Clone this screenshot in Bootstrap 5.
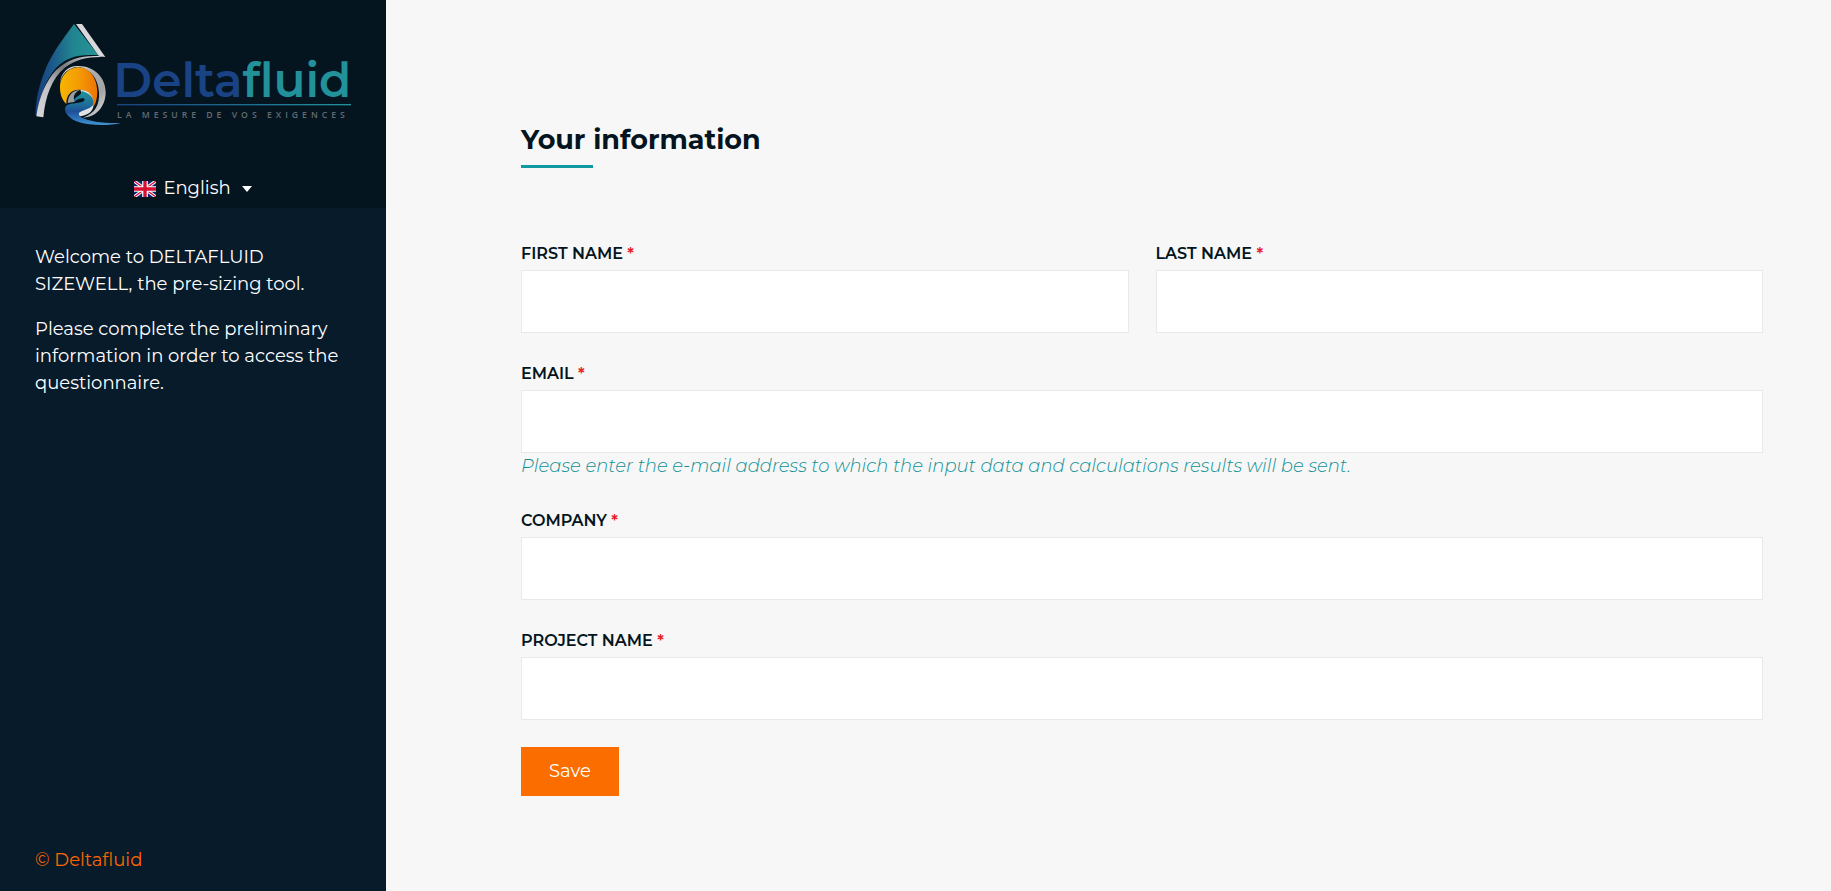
<!DOCTYPE html>
<html lang="en">
<head>
<meta charset="utf-8">
<meta name="viewport" content="width=device-width, initial-scale=1">
<title>Deltafluid Sizewell</title>
<link href="https://cdn.jsdelivr.net/npm/bootstrap@5.3.0/dist/css/bootstrap.min.css" rel="stylesheet">
<style>
  body { font-family: Montserrat, Inter, sans-serif; font-size: 18px; line-height: 27px; color: #041520; background: #f7f7f7; }
  .side-panel { background: #071b2b; color: #fff; }
  .side-top { background: #041520; padding: 22px 35px 6px; }
  .side-text { padding: 36px 35px 0; }
  .side-text p { margin-bottom: 18px; }
  .side-foot { padding: 17px 35px; }
  .side-foot a { color: #ff6600; text-decoration: none; }
  .lang-btn { color: #fff; font-size: 18px; line-height: 27px; padding: 0; border: 0; border-radius: 0; margin-top: 48px; gap: 7px; }
  .lang-btn:hover { color: #fff; }
  .lang-btn::after { margin-left: 4px; border-top-width: 6px; border-left-width: 5px; border-right-width: 5px; }
  .form-area { padding: 119px 16px 32px; }
  .page-title { font-size: 27px; line-height: 42px; font-weight: 700; margin-bottom: 72px; }
  .page-title::after { content: ""; display: block; width: 72px; height: 3px; margin-top: 4px; background: #0e9aa0; }
  .form-label { font-size: 16px; line-height: 27px; font-weight: 600; margin-bottom: 3px; text-transform: uppercase; display: block; }
  .form-label span { color: #e8202a; }
  .form-control { height: 63px; border: 1px solid #e9e9e9; border-radius: 0; background: #fff; font-size: 18px; }
  .form-text { color: #0e9095; font-size: 18px; line-height: 27px; font-style: italic; font-weight: 300; margin: 0; }
  .form-grid { --bs-gutter-x: 27px; --bs-gutter-y: 27px; }
  .save-btn { background: #fc6d00; color: #fff; border: 0; border-radius: 0; font-size: 18px; line-height: 27px; padding: 11px 28px; }
  .save-btn:hover { background: #e66400; color: #fff; }
  @media (min-width: 992px) {
    .side-panel { width: 386px; min-height: 100vh; }
    .form-area { padding-left: 135px; padding-right: 68px; }
  }
</style>
</head>
<body>
<div class="d-flex flex-column flex-lg-row">
  <aside class="side-panel d-flex flex-column flex-shrink-0">
    <div class="side-top text-center">
      <svg class="d-block w-100" viewBox="45 36 948 315" role="img" aria-label="Deltafluid">
        <defs>
          <linearGradient id="drop" x1="0" y1="0" x2="1" y2="0"><stop offset="0" stop-color="#173f7c"/><stop offset=".25" stop-color="#1c568b"/><stop offset=".6" stop-color="#21858f"/><stop offset="1" stop-color="#269597"/></linearGradient>
          <linearGradient id="steel" x1="0" y1="1" x2="1" y2="0"><stop offset="0" stop-color="#d9d9db"/><stop offset=".35" stop-color="#bfc0c2"/><stop offset=".6" stop-color="#77797c"/><stop offset="1" stop-color="#e6e6e8"/></linearGradient>
          <linearGradient id="ring" x1="0" y1="0" x2="1" y2="1"><stop offset="0" stop-color="#f2f2f2"/><stop offset=".45" stop-color="#aaa"/><stop offset=".7" stop-color="#a4a5a7"/><stop offset="1" stop-color="#e5e5e5"/></linearGradient>
          <linearGradient id="sun" x1="0" y1="0" x2="1" y2="0"><stop offset="0" stop-color="#f6b501"/><stop offset=".5" stop-color="#f59b04"/><stop offset="1" stop-color="#ed7304"/></linearGradient>
          <linearGradient id="wave" x1="0" y1="0" x2="0" y2="1"><stop offset="0" stop-color="#23949a"/><stop offset=".4" stop-color="#1e6d99"/><stop offset=".6" stop-color="#1e4f98"/><stop offset="1" stop-color="#3e94d3"/></linearGradient>
          <linearGradient id="rule" x1="0" y1="0" x2="1" y2="0"><stop offset="0" stop-color="#194384"/><stop offset="1" stop-color="#21929a"/></linearGradient>
        </defs>
        <path d="M162 42C125 91 96 132 78 174C58 222 48 263 46 314L50 316C58 260 78 207 108 174C140 139 183 131 235 136Z" fill="url(#drop)"/>
        <path d="M168 42H186L256 141L236 137Z" fill="#d9d9dc"/>
        <path d="M256 141C208 139 170 146 136 172C95 204 76 261 70 322L49 319C57 262 77 214 108 181C143 146 184 136 236 138Z" fill="url(#steel)"/>
        <path d="M172 168C218 166 257 199 257 247C257 291 226 323 189 323C226 310 239 285 237 247C235 208 212 174 172 171C142 174 126 193 120 218C123 190 143 168 172 168Z" fill="url(#ring)"/>
        <path d="M175 172C210 172 232 207 232 246C232 263 228 278 222 288C223 260 205 239 177 239C153 239 138 256 139 282C127 270 120 253 120 233C120 198 146 172 175 172Z" fill="url(#sun)"/>
        <path d="M181 239C158 241 144 254 143 279L165 275C157 261 163 247 181 239Z" fill="#999b9d"/>
        <path d="M181 240C207 239 223 260 221 286C218 306 203 316 181 319C172 313 174 307 184 302C198 295 203 289 202 281Z" fill="#e0e2e4"/>
        <path d="M186 243C210 250 224 264 220 284C212 296 192 298 180 306C172 313 179 320 190 325C220 338 261 339 303 340C266 347 213 348 178 337C148 328 131 308 136 292C144 273 188 285 194 269C194 262 178 263 162 275C160 260 184 259 186 243Z" fill="url(#wave)"/>
        <text x="280" y="261" font-family="Montserrat, Inter, sans-serif" font-size="141" font-weight="600" fill="#194384">Delta<tspan fill="#21929a">fluid</tspan></text>
        <rect x="291" y="282" width="702" height="4" fill="url(#rule)"/>
        <text x="291" y="324" font-family="'Open Sans', sans-serif" font-size="26" font-weight="600" letter-spacing="12" fill="#666b70">LA MESURE DE VOS EXIGENCES</text>
      </svg>
      <button type="button" class="btn lang-btn dropdown-toggle d-inline-flex align-items-center" data-bs-toggle="dropdown">
        <svg width="22" height="16" viewBox="0 0 66 48" aria-hidden="true">
          <path fill="#0a2472" d="M0 0h66v48H0z"/>
          <path stroke="#fff" stroke-width="10" d="M0 0l66 48M66 0L0 48"/>
          <path stroke="#d80f32" stroke-width="4" d="M0 0l66 48M66 0L0 48"/>
          <path stroke="#fff" stroke-width="17" d="M33 0v48M0 24h66"/>
          <path stroke="#d80f32" stroke-width="10" d="M33 0v48M0 24h66"/>
        </svg>
        <span>English</span>
      </button>
    </div>
    <div class="side-text">
      <p>Welcome to DELTAFLUID SIZEWELL, the pre-sizing tool.</p>
      <p>Please complete the preliminary information in order to access the questionnaire.</p>
    </div>
    <footer class="side-foot mt-auto"><a href="#">© Deltafluid</a></footer>
  </aside>
  <main class="form-area flex-grow-1">
    <h1 class="page-title">Your information</h1>
    <form class="row form-grid">
      <div class="col-md-6">
        <label class="form-label" for="first">First name <span>*</span></label>
        <input class="form-control" id="first" type="text" required>
      </div>
      <div class="col-md-6">
        <label class="form-label" for="last">Last name <span>*</span></label>
        <input class="form-control" id="last" type="text" required>
      </div>
      <div class="col-12">
        <label class="form-label" for="email">Email <span>*</span></label>
        <input class="form-control" id="email" type="email" aria-describedby="email-help" required>
        <div class="form-text" id="email-help">Please enter the e-mail address to which the input data and calculations results will be sent.</div>
      </div>
      <div class="col-12">
        <label class="form-label" for="company">Company <span>*</span></label>
        <input class="form-control" id="company" type="text" required>
      </div>
      <div class="col-12">
        <label class="form-label" for="project">Project name <span>*</span></label>
        <input class="form-control" id="project" type="text" required>
      </div>
      <div class="col-12"><button type="submit" class="btn save-btn">Save</button></div>
    </form>
  </main>
</div>
<script src="https://cdn.jsdelivr.net/npm/bootstrap@5.3.0/dist/js/bootstrap.bundle.min.js"></script>
</body>
</html>
